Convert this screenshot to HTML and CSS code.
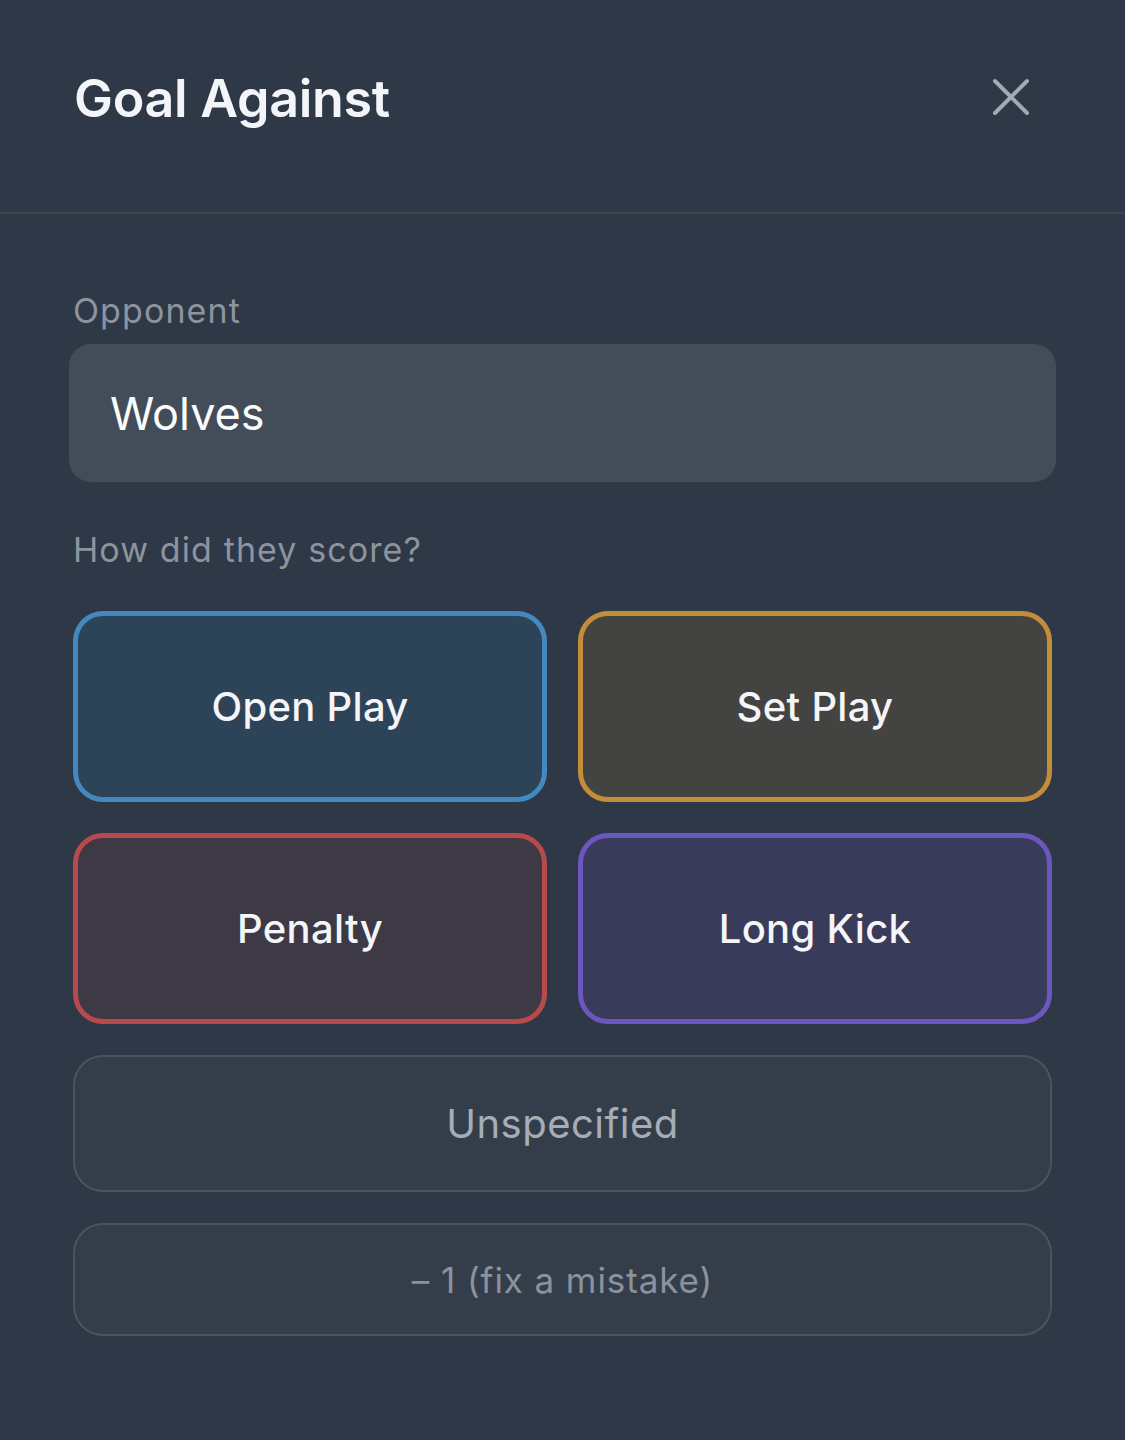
FILE: index.html
```html
<!DOCTYPE html>
<html>
<head>
<meta charset="utf-8">
<title>Goal Against</title>
<link rel="stylesheet" href="styles.css">
</head>
<body>
<div class="sheet">
  <div class="sheet_head">
    <h1 class="title">Goal Against</h1>
    <button class="close_btn" type="button" aria-label="Close">
      <svg width="38" height="38" viewBox="0 0 38 38"><path d="M3 3 L35 35 M35 3 L3 35" stroke="#a3aab4" stroke-width="4" stroke-linecap="round" fill="none"/></svg>
    </button>
  </div>
  <div class="sheet_body">
    <div class="field_label">Opponent</div>
    <div class="text_input">Wolves</div>
    <div class="field_label score_label">How did they score?</div>
    <div class="choice_grid">
      <button class="choice open_play" type="button">Open Play</button>
      <button class="choice set_play" type="button">Set Play</button>
      <button class="choice penalty" type="button">Penalty</button>
      <button class="choice long_kick" type="button">Long Kick</button>
    </div>
    <button class="plain_btn unspecified" type="button">Unspecified</button>
    <button class="plain_btn undo" type="button">&ndash; 1 (fix a mistake)</button>
  </div>
</div>
</body>
</html>
```

FILE: styles.css
```css
html,body{margin:0;padding:0;background:#2e3846;}
body{font-family:Inter,"Noto Sans","Liberation Sans",sans-serif;color:#f3f5f8;}
button{font-family:inherit;cursor:pointer;}
.sheet{width:1125px;min-height:1440px;}
.sheet_head{display:flex;align-items:center;justify-content:space-between;padding:0 95px 0 74px;border-bottom:2px solid #3a4451;box-sizing:border-box;height:214px;}
.title{margin:0;font-size:52px;font-weight:600;letter-spacing:-0.3px;color:#f3f5f8;margin-top:-16px;}
.close_btn{background:none;border:0;padding:0;width:38px;height:38px;margin-top:-18px;}
.close_btn svg{display:block;}
.sheet_body{padding:76px 73px 0 73px;}
.field_label{font-size:34px;line-height:41px;color:#8c949f;letter-spacing:1.1px;}
.text_input{margin:13px -4px 0 -4px;height:138px;border-radius:22px;background:#434d59;padding:0 41px;display:flex;align-items:center;font-size:45px;color:#fafbfc;}
.score_label{margin-top:47px;}
.choice_grid{margin-top:41px;display:grid;grid-template-columns:1fr 1fr;gap:31px;}
.choice{height:191px;border-radius:30px;border:5px solid;font-size:40px;font-weight:500;color:#f3f5f8;letter-spacing:0.3px;}
.open_play{background:#2d4358;border-color:#4488c0;}
.set_play{background:#434442;border-color:#c38e3a;}
.penalty{background:#3d3945;border-color:#b84a4c;}
.long_kick{background:#383c5a;border-color:#6b58bf;}
.plain_btn{display:block;width:100%;margin-top:31px;background:#343e4b;border:2px solid #4a5461;border-radius:30px;}
.unspecified{height:137px;font-size:40px;color:#a7adb6;letter-spacing:0.5px;}
.undo{height:113px;font-size:35px;color:#8b929c;letter-spacing:0.9px;}
```
